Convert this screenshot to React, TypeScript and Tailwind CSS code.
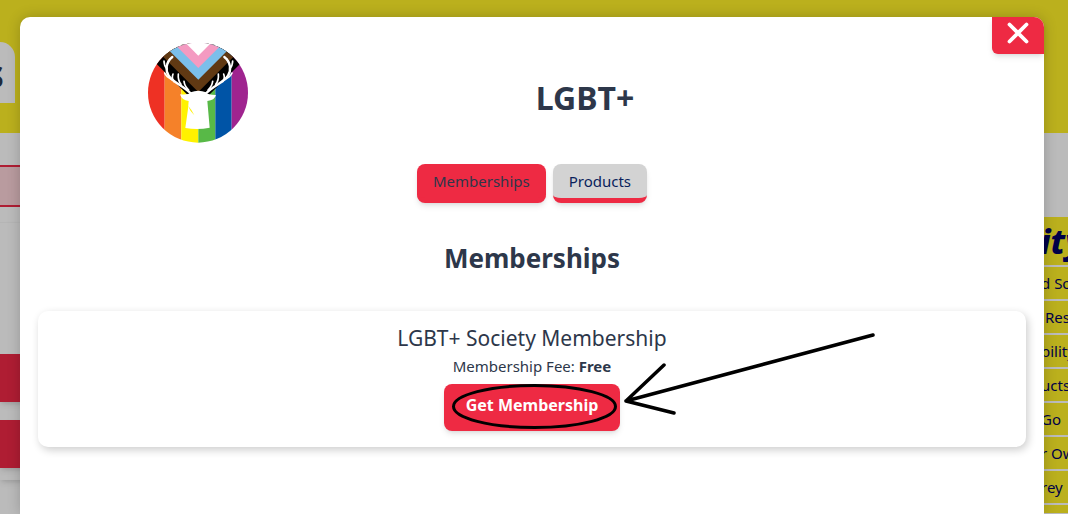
const links = ["d So", "\u00a0Res", "bility", "ucts", "Go", "r Ow", "rey"];

function Logo() {
  return (
    <svg viewBox="30 30 300 300" className="size-[100px]" role="img" aria-label="Society logo">
      <defs>
        <clipPath id="disc">
          <circle cx="180" cy="179" r="150" />
        </clipPath>
      </defs>
      <g clipPath="url(#disc)">
        <rect x="30" y="20" width="50" height="310" fill="#ee3124" />
        <rect x="80" y="20" width="50" height="310" fill="#f58129" />
        <rect x="130" y="20" width="51" height="310" fill="#fff200" />
        <rect x="181" y="20" width="51" height="310" fill="#58b947" />
        <rect x="232" y="20" width="49" height="310" fill="#0054a6" />
        <rect x="281" y="20" width="50" height="310" fill="#9f248f" />
        <path d="M-17 20L181 218L379 20Z" fill="#000" />
        <path d="M24 20L181 177L338 20Z" fill="#603913" />
        <path d="M61 20L181 140L301 20Z" fill="#7bbfea" />
        <path d="M96 20L181 105L266 20Z" fill="#f49ac1" />
        <path d="M133 20L181 68L229 20Z" fill="#fff" />
      </g>
      <g fill="none" stroke="#fff" strokeLinecap="round" strokeLinejoin="round">
        <g strokeWidth="7">
          <path d="M103 72C83 88 82 112 92 128C104 149 135 156 160 183" />
          <path d="M259 72C279 88 280 112 270 128C258 149 227 156 202 183" />
        </g>
        <g strokeWidth="5">
          <path d="M78 84Q78 98 87 108M80 120Q85 132 102 140M105 123Q100 136 108 146M121 123Q119 142 129 154M138 145Q140 160 152 171M95 78L88 93" />
          <path d="M284 84Q284 98 275 108M282 120Q277 132 260 140M257 123Q262 136 254 146M241 123Q243 142 233 154M224 145Q222 160 210 171M267 78L274 93" />
        </g>
      </g>
      <path
        d="M158 178Q181 169 204 178Q208 186 234 186Q230 202 208 204L215 284Q180 291 142 285L150 228L152 204Q131 202 126 184Q151 187 158 178Z"
        fill="#fff"
      />
      <path d="M150 218Q157 236 169 247Q160 228 150 218Z" fill="#fff200" />
    </svg>
  );
}

function Backdrop() {
  return (
    <div className="flex min-h-screen flex-col bg-[#bbbbbb]">
      <header className="h-[133px] bg-[#bbb01d] pt-[42px]">
        <div className="flex h-[61px] w-[15px] items-center justify-end overflow-hidden rounded-tr-[15px] bg-[#bbbbbb] pr-[11px] text-[40px] leading-10 font-bold text-[#1e293b]">
          <span>s</span>
        </div>
      </header>
      <div className="flex flex-1 items-start justify-between">
        <div className="w-8 pt-8">
          <div className="h-[42px] border-y-2 border-[#af1d33] bg-[#b99b9f]" />
          <div className="mt-[15px] h-[258px] border-t border-[#b5b5b5] pt-[131px] shadow-md">
            <div className="h-12 bg-[#af1d33] shadow-md" />
            <div className="mt-[18px] h-12 bg-[#af1d33] shadow-md" />
          </div>
        </div>
        <aside className="mt-[84px] w-[28px] overflow-hidden whitespace-nowrap text-[#000048]">
          <h2 className="h-12 bg-[#bbb01d] text-[34px] leading-[48px] font-extrabold italic">ity</h2>
          <ul>
            {links.map((l) => (
              <li key={l} className="mt-0.5 h-8 bg-[#bbb01d] pl-px text-[15px] leading-8">
                <a href="#">{l}</a>
              </li>
            ))}
            <li className="mt-0.5 h-2 bg-[#bbb01d]" />
          </ul>
        </aside>
      </div>
    </div>
  );
}

export default function App() {
  return (
    <div className="relative h-screen overflow-hidden font-['Noto_Sans',sans-serif] text-[15px] text-[#2d374a]">
      <Backdrop />
      <div className="absolute inset-0 flex pt-[17px] pr-6 pl-5">
        <main
          role="dialog"
          aria-label="LGBT+"
          className="relative flex-1 rounded-t-[10px] bg-white px-[18px] pt-[26px] shadow-[0_0_14px_rgba(0,0,0,0.2)]"
        >
          <button
            aria-label="Close"
            className="absolute top-0 right-0 flex h-[37px] w-[52px] justify-center rounded-tr-[10px] rounded-bl-md bg-[#ee2a43] pt-1.5 shadow-md"
          >
            <svg viewBox="0 0 20 20" className="size-5 overflow-visible" stroke="#fff" strokeWidth="3.8" strokeLinecap="round">
              <path d="M1.5 1.5L18.5 18.5M18.5 1.5L1.5 18.5" />
            </svg>
          </button>
          <div className="grid grid-cols-[320fr_454fr_214fr] items-center justify-items-center">
            <Logo />
            <h1 className="pt-2.5 text-[32px] leading-10 font-bold">LGBT+</h1>
          </div>
          <nav className="mt-[21px] flex justify-center gap-[7px]">
            <button className="h-[39px] rounded-lg border-b-[5px] border-[#ee2a43] bg-[#ee2a43] px-4 shadow-md">
              Memberships
            </button>
            <button className="h-[39px] rounded-lg border-b-[5px] border-[#ee2a43] bg-[#d3d3d3] px-4 text-[#0a1f5c] shadow-md">
              Products
            </button>
          </nav>
          <h2 className="mt-[35px] text-center text-[26px] leading-10 font-bold">Memberships</h2>
          <section className="mt-[33px] flex flex-col items-center rounded-[10px] pt-[11px] pb-4 shadow-[2px_3px_8px_rgba(0,0,0,0.2)]">
            <h3 className="text-[21px] leading-8">LGBT+ Society Membership</h3>
            <p className="leading-6">
              Membership Fee: <b>Free</b>
            </p>
            <div className="relative mt-1.5">
              <button className="h-[47px] rounded-lg bg-[#ee2a43] px-[22px] pb-1.5 text-base font-bold text-white shadow-md">
                Get Membership
              </button>
              <svg
                viewBox="0 0 435 110"
                className="pointer-events-none absolute -top-14 left-0 h-[110px] w-[435px] max-w-none"
                fill="none"
                stroke="#000"
                strokeWidth="3.5"
                strokeLinecap="round"
                aria-hidden="true"
              >
                <ellipse cx="90.5" cy="78.5" rx="81" ry="21" strokeWidth="3" />
                <path d="M182 73L429 7M182 73L220 37M182 73L230 85" />
              </svg>
            </div>
          </section>
        </main>
      </div>
    </div>
  );
}
